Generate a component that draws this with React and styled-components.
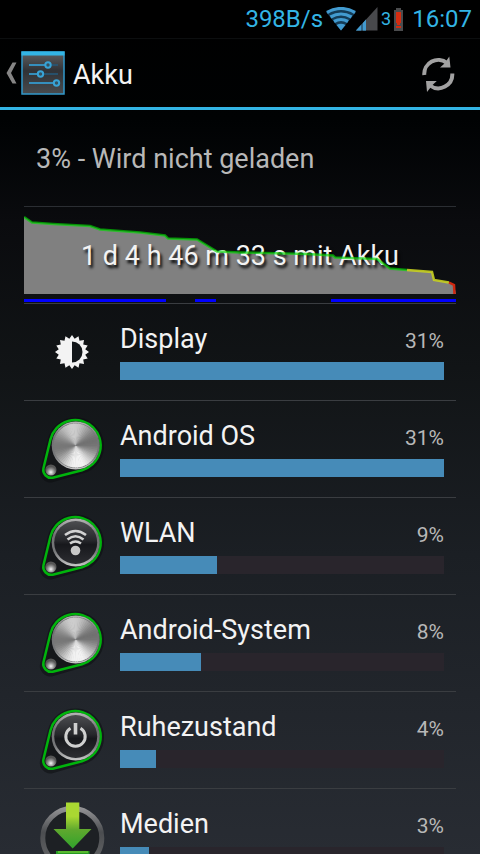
import { useId } from "react";
import styled, { createGlobalStyle } from "styled-components";

const GlobalStyle = createGlobalStyle`
  * {
    box-sizing: border-box;
  }

  body {
    margin: 0;
    background: #000;
    color: #f3f3f3;
    font-family: Roboto, "Liberation Sans", sans-serif;
  }
`;

const Screen = styled.div`
  display: flex;
  flex-direction: column;
  height: 100vh;
  background: linear-gradient(#000 0%, #000203 14%, #0a0b0e 26%, #111416 43%, #1b1f24 65%, #282c33 100%);
`;

const StatusBar = styled.div`
  display: flex;
  align-items: center;
  justify-content: flex-end;
  height: 38px;
  padding-right: 8px;
  background: #000;
  color: #33b5e5;
  font-size: 24px;
  line-height: 38px;

  svg {
    display: block;
    flex: none;
  }
`;

const StatusIcons = styled.div`
  display: flex;
  align-items: center;
  margin: 0 9px 0 3px;
`;

const BatteryLevel = styled.span`
  margin: 0 3px;
  font-size: 18px;
`;

const Header = styled.header`
  display: flex;
  align-items: center;
  justify-content: space-between;
  height: 72px;
  padding: 0 24px 0 5px;
  border-top: 1px solid #0c0e0f;
  border-bottom: 3px solid #33b5e5;
`;

const HeaderButton = styled.button`
  display: flex;
  align-items: center;
  gap: 4px;
  padding: 0;
  border: 0;
  background: none;
  color: inherit;
  cursor: pointer;

  svg {
    display: block;
  }
`;

const HeaderLeft = styled.div`
  display: flex;
  align-items: center;
  gap: 8px;
`;

const Title = styled.h1`
  margin: 0;
  padding-top: 4px;
  font-size: 27px;
  font-weight: 400;
  line-height: 32px;
`;

const Content = styled.main`
  flex: 1;
  min-height: 0;
  padding: 0 24px;
  overflow-y: auto;
  scrollbar-width: none;
`;

const Summary = styled.p`
  margin: 0;
  padding: 2px 12px 0;
  color: #b8b8b8;
  font-size: 27px;
  line-height: 94px;
`;

const History = styled.section`
  height: 97px;
  border-top: 1px solid #2b2e33;
`;

const HistoryLayers = styled.div`
  position: relative;
  z-index: 0;
`;

const HistoryText = styled.p`
  margin: 0;
  font-size: 27px;
  line-height: 98px;
  text-align: center;
  text-shadow: 2px 3px 3px #000;
`;

const ChartLayer = styled.svg`
  position: absolute;
  top: 0;
  left: 0;
  width: 100%;
  height: 96px;
  z-index: ${(props) => (props.$front ? 1 : -1)};
`;

const List = styled.ul`
  margin: 0;
  padding: 0;
  list-style: none;
`;

const Row = styled.li`
  display: flex;
  align-items: center;
  gap: 12px;
  height: 97px;
  padding: 0 12px;
  border-top: 1px solid #3a3d41;

  svg {
    display: block;
    flex: none;
  }
`;

const RowBody = styled.div`
  flex: 1;
  padding-bottom: 2px;
`;

const RowText = styled.div`
  display: flex;
  align-items: baseline;
  justify-content: space-between;
  margin-bottom: 4px;
  line-height: 34px;
`;

const Name = styled.span`
  font-size: 27px;
`;

const Percent = styled.span`
  color: #b8b8b8;
  font-size: 21px;
`;

const Track = styled.div`
  height: 18px;
  background: #29252c;
`;

const Fill = styled.div`
  height: 100%;
  background: #468bb8;
`;

const WifiIcon = () => (
  <svg width="30" height="24" viewBox="1 0 30 24">
    <path d="M16 23.500L1 5Q16-4 31 5Z" fill="#143c57" />
    <g fill="none" stroke="#429bd0" strokeWidth="3.200">
      <path d="M2 5.500Q16-2.500 30 5.500" />
      <path d="M5.500 10Q16 4 26.500 10" />
      <path d="M9 14.500Q16 10.500 23 14.500" />
    </g>
    <path d="M11.500 18Q16 15.500 20.500 18L16 23.500Z" fill="#429bd0" />
  </svg>
);

const SignalIcon = () => (
  <svg width="22" height="24" viewBox="0 0 22 24">
    <path d="M21.500 0V23.500H0Z" fill="#48494c" />
    <path d="M10 12.500V23.500H0Z" fill="#2d6588" />
    <path d="M5 18V23.500H0ZM7 16L10 12.500V23.500H7Z" fill="#429bd0" />
  </svg>
);

const BatteryIcon = () => (
  <svg width="9" height="24" viewBox="0 0 9 24">
    <path d="M2 1H7V3H9V24H0V3H2Z" fill="#4b4c4e" />
    <path d="M2 5H7V16H6V18H3V16H2ZM2 19H7V21H2Z" fill="#d52c10" />
  </svg>
);

const BackIcon = () => (
  <svg width="12" height="22" viewBox="0 0 12 22">
    <path d="M11.500 0.500H7.500L1.500 11L7.500 21.500H11.500L6 11Z" fill="#858585" />
  </svg>
);

const SettingsIcon = () => {
  const id = useId();
  return (
    <svg width="44" height="44" viewBox="0 0 44 44">
      <defs>
        <linearGradient id={id} x2="0" y2="1">
          <stop offset="0" stopColor="#5e6062" />
          <stop offset="0.450" stopColor="#303236" />
          <stop offset="1" stopColor="#484b4e" />
        </linearGradient>
      </defs>
      <rect x="1" y="1" width="42" height="42" fill={`url(#${id})`} stroke="#3299cb" strokeWidth="1.500" />
      <rect x="0.500" y="0.500" width="43" height="4" fill="#33b5e5" />
      <path d="M8 14H37M8 23H37M8 32H34" stroke="#24597b" strokeWidth="1.500" />
      <path d="M8 14H24M8 23H17M8 32H33" stroke="#3aa4d8" strokeWidth="1.500" />
      <g fill="#35515f" stroke="#38a3d6" strokeWidth="2">
        <circle cx="27" cy="14" r="2.700" />
        <circle cx="19.500" cy="23" r="2.700" />
        <circle cx="35.500" cy="32" r="2.700" />
      </g>
    </svg>
  );
};

const RefreshIcon = () => (
  <svg width="34" height="38" viewBox="0 0 34 38">
    <g fill="none" stroke="#a2a2a2" strokeWidth="4">
      <path d="M2.300 21A14 14 0 0 1 25 9" />
      <path d="M30.300 19.500A14 14 0 0 1 8 31.500" />
    </g>
    <path d="M27.300 2.500L28.500 13.500H18L22.500 9.500ZM5 38L4 27H14.800L10.500 31Z" fill="#a2a2a2" />
  </svg>
);

const BrightnessIcon = () => {
  const teeth = 16;
  const points = Array.from({ length: teeth * 2 }, (_, i) => {
    const angle = (i * Math.PI) / teeth;
    const radius = i % 2 ? 13.5 : 17;
    return `${36 + radius * Math.sin(angle)},${36 - radius * Math.cos(angle)}`;
  }).join(" ");
  return (
    <svg width="72" height="72" viewBox="0 0 72 72">
      <polygon points={points} fill="#f3f3f3" />
      <path d="M36 25.500A10.500 10.500 0 0 1 36 46.500Z" fill="#121619" />
    </svg>
  );
};

const Wedge = ({ index, count }) => {
  const start = (index * 2 * Math.PI) / count;
  const end = ((index + 1.3) * 2 * Math.PI) / count;
  const mid = (start + end) / 2;
  // bright at the top and bottom, dark at both sides
  const light = 172 - 55 * Math.cos(2 * mid + 0.25) + 22 * Math.sin(mid);
  const v = Math.round(Math.max(100, Math.min(242, light)));
  return (
    <path
      d={`M39.700 32.500L${39.7 + 22 * Math.cos(start)} ${32.5 + 22 * Math.sin(start)}L${39.7 + 22 * Math.cos(end)} ${32.5 + 22 * Math.sin(end)}Z`}
      fill={`rgb(${v},${v},${v})`}
    />
  );
};

const KnobIcon = ({ face }) => {
  const id = useId();
  return (
    <svg width="72" height="72" viewBox="0 0 72 72">
      <defs>
        <linearGradient id={`${id}rim`} x2="0" y2="1">
          <stop offset="0" stopColor="#b5b5b5" />
          <stop offset="0.350" stopColor="#707072" />
          <stop offset="0.700" stopColor="#77787a" />
          <stop offset="1" stopColor="#c9c9c9" />
        </linearGradient>
        <linearGradient id={`${id}dark`} x2="0" y2="1">
          <stop offset="0" stopColor="#4c4d50" />
          <stop offset="0.450" stopColor="#26272b" />
          <stop offset="0.550" stopColor="#17181c" />
          <stop offset="1" stopColor="#2c2d31" />
        </linearGradient>
        <radialGradient id={`${id}ball`} cx="0.500" cy="0.700">
          <stop offset="0" stopColor="#f5f5f5" />
          <stop offset="0.600" stopColor="#8c8c8c" />
          <stop offset="1" stopColor="#555" />
        </radialGradient>
      </defs>
      <path
        d="M6.900 56L14.300 26.700A26 26 0 1 1 46 58.200L16.700 66.500A8 8 0 0 1 6.900 56Z"
        fill="none"
        stroke="#090b0d"
        strokeWidth="5"
        opacity="0.500"
      />
      <path
        d="M7.400 55.500L14.500 26.200A25.500 25.500 0 1 1 46 57.200L16.700 64.700A8 8 0 0 1 7.400 55.500Z"
        fill="#15171a"
        stroke="#00b40c"
        strokeWidth="2.500"
      />
      <circle cx="39.700" cy="32.500" r="24" fill={`url(#${id}rim)`} />
      {face === "metal" ? (
        <>
          <circle cx="39.700" cy="32.500" r="22.600" fill="#77787a" />
          {Array.from({ length: 60 }, (_, i) => (
            <Wedge key={i} index={i} count={60} />
          ))}
        </>
      ) : (
        <circle cx="39.700" cy="32.500" r="21.500" fill={`url(#${id}dark)`} />
      )}
      {face === "wifi" && (
        <g fill="none" stroke="#d2d2d2" strokeWidth="2.600">
          <path d="M29 25Q39.500 17 50 25" />
          <path d="M31.500 29.500Q39.500 23 47.500 29.500" />
          <path d="M34 33.500Q39.500 29.500 45 33.500" />
          <circle cx="39.500" cy="40.500" r="4.800" fill="#c8c8c8" stroke="none" />
        </g>
      )}
      {face === "power" && (
        <g fill="none" stroke="#d0d0d0">
          <path d="M34.500 24.300A9.700 9.700 0 1 0 44.500 24.300" strokeWidth="3" />
          <path d="M39.500 19V30.500" strokeWidth="3.600" />
        </g>
      )}
      <circle cx="14.900" cy="57" r="5.600" fill={`url(#${id}ball)`} />
    </svg>
  );
};

const DownloadIcon = () => {
  const id = useId();
  return (
    <svg width="72" height="72" viewBox="0 0 72 72">
      <defs>
        <linearGradient id={`${id}ring`} x2="0" y2="1">
          <stop offset="0" stopColor="#929294" />
          <stop offset="0.400" stopColor="#4b4d50" />
          <stop offset="1" stopColor="#68696b" />
        </linearGradient>
        <linearGradient id={`${id}arrow`} x2="0" y2="1">
          <stop offset="0.300" stopColor="#aad832" />
          <stop offset="0.600" stopColor="#5ea82e" />
          <stop offset="1" stopColor="#31a32c" />
        </linearGradient>
      </defs>
      <circle cx="36.300" cy="37" r="29.500" fill="#1d2024" stroke={`url(#${id}ring)`} strokeWidth="5" />
      <path d="M30 1.500H43.300V28H55.500L36.700 47.500L17.500 28H30Z" fill={`url(#${id}arrow)`} />
      <path d="M20 50H53.500V55H20Z" fill="#259a22" />
      <path d="M22 50.500H52V51.500H22Z" fill="#8bd83a" />
    </svg>
  );
};

const LEVEL_GREEN =
  "0,10 8,15.500 29,17 66,19 76,22.500 116,25.500 141,28.500 144,31.500 173,32.500 193,44.500 216,45.500 283,47 309,48.500 311,50.500 353,52 366,61.500 383,63";
const LEVEL_YELLOW = "383,63 408,65 410,73 425,75.500";
const LEVEL_RED = "425,75.500 430,78 430.500,87";

const BatteryHistory = () => (
  <History>
    <HistoryLayers>
      <ChartLayer viewBox="0 0 432 96" preserveAspectRatio="none">
        <polygon points={`0,87 ${LEVEL_GREEN} ${LEVEL_YELLOW} 430,78 432,87`} fill="#808080" />
        <path d="M0 93.500H142M171 93.500H192M307 93.500H432" stroke="#00f" strokeWidth="3" />
      </ChartLayer>
      <HistoryText>1 d 4 h 46 m 33 s mit Akku</HistoryText>
      <ChartLayer $front viewBox="0 0 432 96" preserveAspectRatio="none" fill="none" strokeWidth="2.500">
        <polyline points={LEVEL_GREEN} stroke="#00d800" strokeOpacity="0.650" />
        <polyline points={LEVEL_YELLOW} stroke="#c8d020" strokeOpacity="0.900" />
        <polyline points={LEVEL_RED} stroke="#d02810" />
      </ChartLayer>
    </HistoryLayers>
  </History>
);

const consumers = [
  { name: "Display", percent: 31, icon: <BrightnessIcon /> },
  { name: "Android OS", percent: 31, icon: <KnobIcon face="metal" /> },
  { name: "WLAN", percent: 9, bar: 30, icon: <KnobIcon face="wifi" /> },
  { name: "Android-System", percent: 8, bar: 25, icon: <KnobIcon face="metal" /> },
  { name: "Ruhezustand", percent: 4, bar: 11, icon: <KnobIcon face="power" /> },
  { name: "Medien", percent: 3, bar: 9, icon: <DownloadIcon /> },
];

const App = function () {
  return (
    <Screen>
      <GlobalStyle />
      <StatusBar>
        <span>398B/s</span>
        <StatusIcons>
          <WifiIcon />
          <SignalIcon />
          <BatteryLevel>3</BatteryLevel>
          <BatteryIcon />
        </StatusIcons>
        <time>16:07</time>
      </StatusBar>

      <Header>
        <HeaderLeft>
          <HeaderButton type="button" aria-label="Zurück">
            <BackIcon />
            <SettingsIcon />
          </HeaderButton>
          <Title>Akku</Title>
        </HeaderLeft>
        <HeaderButton type="button" aria-label="Aktualisieren">
          <RefreshIcon />
        </HeaderButton>
      </Header>

      <Content>
        <Summary>3% - Wird nicht geladen</Summary>
        <BatteryHistory />
        <List>
          {consumers.map(({ name, percent, bar = 100, icon }) => (
            <Row key={name}>
              {icon}
              <RowBody>
                <RowText>
                  <Name>{name}</Name>
                  <Percent>{percent}%</Percent>
                </RowText>
                <Track>
                  <Fill style={{ width: `${bar}%` }} />
                </Track>
              </RowBody>
            </Row>
          ))}
        </List>
      </Content>
    </Screen>
  );
};

export default App;
